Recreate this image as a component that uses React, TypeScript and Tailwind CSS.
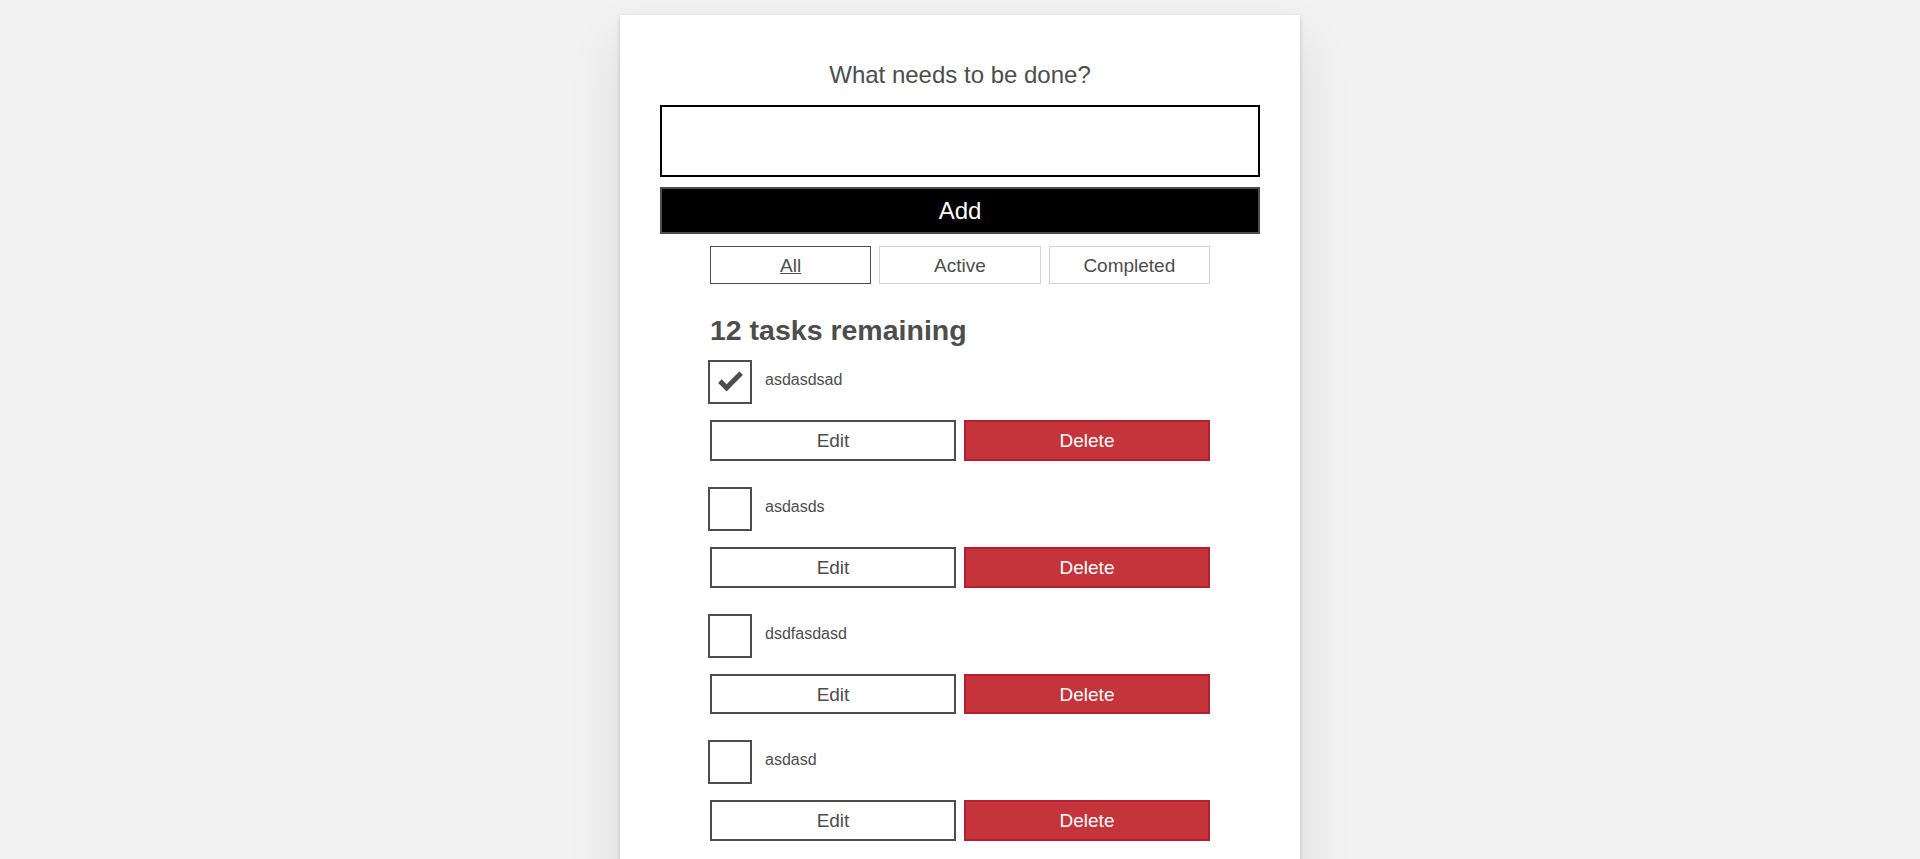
import { useState } from "react";

type Task = {
  id: string;
  name: string;
  completed: boolean;
};

const initialTasks: Task[] = [
  { id: "todo-0", name: "asdasdsad", completed: true },
  { id: "todo-1", name: "asdasds", completed: false },
  { id: "todo-2", name: "dsdfasdasd", completed: false },
  { id: "todo-3", name: "asdasd", completed: false },
  { id: "todo-4", name: "sdfsdf", completed: false },
  { id: "todo-5", name: "qweqwe", completed: false },
  { id: "todo-6", name: "zxczxc", completed: false },
  { id: "todo-7", name: "asdfgh", completed: false },
  { id: "todo-8", name: "fghfgh", completed: false },
  { id: "todo-9", name: "tyutyu", completed: false },
  { id: "todo-10", name: "bnmbnm", completed: false },
  { id: "todo-11", name: "werwer", completed: false },
];

const filters = ["All", "Active", "Completed"];

const Todo = ({
  task,
  first,
  onToggle,
  onDelete,
}: {
  task: Task;
  first: boolean;
  onToggle: () => void;
  onDelete: () => void;
}) => {
  return (
    <li className={first ? "" : "mt-[28px]"}>
      <div className="flex min-h-[44px] items-start text-[16px] leading-[1.25]">
        <button
          type="button"
          onClick={onToggle}
          className="relative -mt-[2px] -ml-[2px] h-[44px] w-[44px] shrink-0 border-2 border-[#4d4d4d]"
        >
          {task.completed && (
            <span className="absolute top-[11px] left-[9px] box-content h-[7px] w-[18px] -rotate-45 border-b-[5px] border-l-[5px] border-[#4d4d4d]" />
          )}
        </button>
        <label className="pt-[8px] pr-[15px] pb-[5px] pl-[13px]">{task.name}</label>
      </div>
      <div className="mt-[14px] flex gap-[8px]">
        <button
          type="button"
          className="flex-1 border-2 border-[#4d4d4d] px-[10px] pt-[8px] pb-[7px] text-[19px] leading-[1.15]"
        >
          Edit
        </button>
        <button
          type="button"
          onClick={onDelete}
          className="flex-1 border-2 border-[#b71f2e] bg-[#c4343a] px-[10px] pt-[8px] pb-[7px] text-[19px] leading-[1.15] text-white"
        >
          Delete
        </button>
      </div>
    </li>
  );
};

export default function App() {
  const [tasks, setTasks] = useState<Task[]>(initialTasks);
  const [filter, setFilter] = useState("All");
  const [name, setName] = useState("");

  const visible = tasks.filter((t) =>
    filter === "Active" ? !t.completed : filter === "Completed" ? t.completed : true,
  );

  const handleSubmit = (e: React.FormEvent) => {
    e.preventDefault();
    if (!name.trim()) return;
    setTasks([...tasks, { id: `todo-${Date.now()}`, name, completed: false }]);
    setName("");
  };

  return (
    <div className="min-h-screen bg-[#f2f2f2] pt-[15px] pb-[40px] font-['Liberation_Sans',Arial,sans-serif] text-[19px] leading-[1.31579] text-[#4d4d4d]">
      <div className="mx-auto max-w-[680px] bg-white p-[40px] shadow-[0_2px_4px_0_rgba(0,0,0,0.2),0_25px_50px_0_rgba(0,0,0,0.1)]">
        <form onSubmit={handleSubmit}>
          <h2 className="mb-[10px] text-center">
            <label
              htmlFor="new-todo-input"
              className="block p-[8px] text-[24px] leading-[1.01567]"
            >
              What needs to be done?
            </label>
          </h2>
          <input
            id="new-todo-input"
            type="text"
            value={name}
            onChange={(e) => setName(e.target.value)}
            className="mb-[10px] block w-full border-2 border-black p-[20px] text-[24px] leading-[1.15] outline-none"
          />
          <button
            type="submit"
            className="block w-full border-2 border-[#4d4d4d] bg-black px-[10px] pt-[8px] pb-[7px] text-[24px] leading-[1.15] text-white"
          >
            Add
          </button>
        </form>

        <div className="mx-auto mt-[12px] flex max-w-[500px] gap-[8px]">
          {filters.map((f) => (
            <button
              key={f}
              type="button"
              onClick={() => setFilter(f)}
              className={`flex-1 border px-[10px] pt-[8px] pb-[7px] text-[19px] leading-[1.15] ${
                filter === f ? "border-[#4d4d4d] underline" : "border-[#d3d3d3]"
              }`}
            >
              {f}
            </button>
          ))}
        </div>

        <h2 className="mx-auto mt-[28px] max-w-[500px] text-[28.5px] leading-[1.31579] font-bold">
          {visible.length} tasks remaining
        </h2>

        <ul className="mx-auto mt-[12px] max-w-[500px]">
          {visible.map((task, i) => (
            <Todo
              key={task.id}
              task={task}
              first={i === 0}
              onToggle={() =>
                setTasks(
                  tasks.map((t) =>
                    t.id === task.id ? { ...t, completed: !t.completed } : t,
                  ),
                )
              }
              onDelete={() => setTasks(tasks.filter((t) => t.id !== task.id))}
            />
          ))}
        </ul>
      </div>
    </div>
  );
}
